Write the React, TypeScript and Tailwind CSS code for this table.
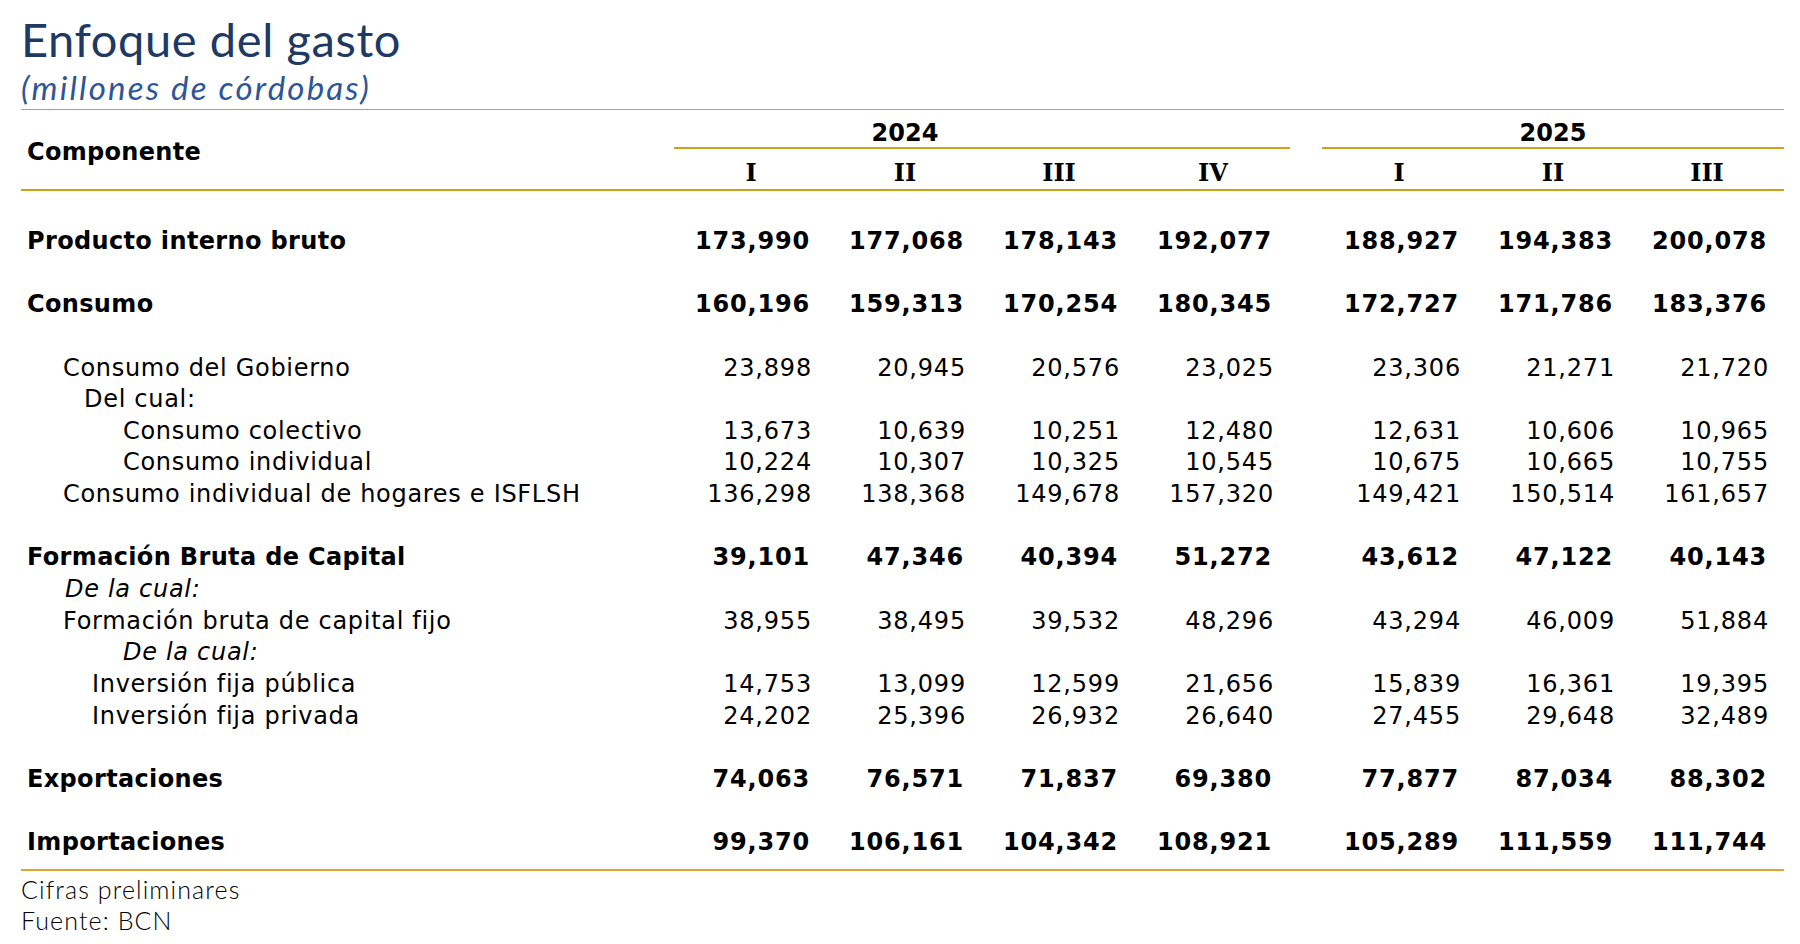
import React from 'react';

type Row = {
    label?: string;
    indent?: string;
    bold?: boolean;
    italic?: boolean;
    values?: string[];
};

const ROWS: Row[] = [
    { label: 'Producto interno bruto', bold: true, indent: 'pl-[6px]', values: ['173,990', '177,068', '178,143', '192,077', '188,927', '194,383', '200,078'] },
    {},
    { label: 'Consumo', bold: true, indent: 'pl-[6px]', values: ['160,196', '159,313', '170,254', '180,345', '172,727', '171,786', '183,376'] },
    {},
    { label: 'Consumo del Gobierno', indent: 'pl-[42px]', values: ['23,898', '20,945', '20,576', '23,025', '23,306', '21,271', '21,720'] },
    { label: 'Del cual:', indent: 'pl-[63px]' },
    { label: 'Consumo colectivo', indent: 'pl-[102px]', values: ['13,673', '10,639', '10,251', '12,480', '12,631', '10,606', '10,965'] },
    { label: 'Consumo individual', indent: 'pl-[102px]', values: ['10,224', '10,307', '10,325', '10,545', '10,675', '10,665', '10,755'] },
    { label: 'Consumo individual de hogares e ISFLSH', indent: 'pl-[42px]', values: ['136,298', '138,368', '149,678', '157,320', '149,421', '150,514', '161,657'] },
    {},
    { label: 'Formación Bruta de Capital', bold: true, indent: 'pl-[6px]', values: ['39,101', '47,346', '40,394', '51,272', '43,612', '47,122', '40,143'] },
    { label: 'De la cual:', italic: true, indent: 'pl-[44px]' },
    { label: 'Formación bruta de capital fijo', indent: 'pl-[42px]', values: ['38,955', '38,495', '39,532', '48,296', '43,294', '46,009', '51,884'] },
    { label: 'De la cual:', italic: true, indent: 'pl-[102px]' },
    { label: 'Inversión fija pública', indent: 'pl-[71px]', values: ['14,753', '13,099', '12,599', '21,656', '15,839', '16,361', '19,395'] },
    { label: 'Inversión fija privada', indent: 'pl-[71px]', values: ['24,202', '25,396', '26,932', '26,640', '27,455', '29,648', '32,489'] },
    {},
    { label: 'Exportaciones', bold: true, indent: 'pl-[6px]', values: ['74,063', '76,571', '71,837', '69,380', '77,877', '87,034', '88,302'] },
    {},
    { label: 'Importaciones', bold: true, indent: 'pl-[6px]', values: ['99,370', '106,161', '104,342', '108,921', '105,289', '111,559', '111,744'] },
];

const sans = "font-['DejaVu_Sans',Verdana,sans-serif]";
const roman = "font-['DejaVu_Serif',serif] font-bold";

export default function App() {
    return (
        <div className="min-h-screen bg-white text-black pl-[21px] pr-[16px] pt-[13px]">
            {/* Title */}
            <div className="w-[1763px] border-b border-[#d4a017] pb-[3px] font-['Lato',sans-serif]">
                <h1 className="text-[47px] leading-[52px] tracking-[0.6px] text-[#203864]">Enfoque del gasto</h1>
                <p className="mt-[3px] text-[33px] leading-[38px] italic tracking-[2.2px] text-[#2e5597]">
                    (millones de córdobas)
                </p>
            </div>

            {/* Table header */}
            <div className={`w-[1763px] flex border-b-2 border-[#d4a017] ${sans} text-[24px] font-bold`}>
                <div className="w-[653px] flex items-center pl-[6px] pt-[4px] tracking-[0.3px]">Componente</div>
                <div className="w-[616px]">
                    <div className="h-[39px] grid grid-cols-4 border-b-2 border-[#d4a017]">
                        <div />
                        <div className="flex items-center justify-center pt-[5px]">2024</div>
                    </div>
                    <div className={`h-[40px] grid grid-cols-4 ${roman}`}>
                        {['I', 'II', 'III', 'IV'].map((q) => (
                            <div key={q} className="flex items-center justify-center pt-[6px]">{q}</div>
                        ))}
                    </div>
                </div>
                <div className="w-[32px]" />
                <div className="w-[462px]">
                    <div className="h-[39px] grid grid-cols-3 border-b-2 border-[#d4a017]">
                        <div />
                        <div className="flex items-center justify-center pt-[5px]">2025</div>
                    </div>
                    <div className={`h-[40px] grid grid-cols-3 ${roman}`}>
                        {['I', 'II', 'III'].map((q) => (
                            <div key={q} className="flex items-center justify-center pt-[6px]">{q}</div>
                        ))}
                    </div>
                </div>
            </div>

            {/* Body */}
            <div className={`w-[1763px] pt-[32px] pb-[13px] border-b-2 border-[#dda62c] ${sans} text-[24px]`}>
                {ROWS.map((row, i) => (
                    <div
                        key={i}
                        className={`h-[31.65px] grid grid-cols-[653px_154px_154px_154px_154px_32px_154px_154px_154px] items-center ${
                            row.bold ? 'font-bold' : ''
                        }`}
                    >
                        <div
                            className={`${row.indent ?? ''} ${row.italic ? 'italic' : ''} ${
                                row.bold ? 'tracking-[0.35px]' : 'tracking-[0.7px]'
                            } whitespace-nowrap`}
                        >
                            {row.label}
                        </div>
                        {row.values?.slice(0, 4).map((v, j) => (
                            <div key={j} className={`text-right tracking-[0.8px] ${row.bold ? 'pr-[18px]' : 'pr-[16px]'}`}>
                                {v}
                            </div>
                        ))}
                        {row.values && <div />}
                        {row.values?.slice(4).map((v, j) => (
                            <div key={j} className={`text-right tracking-[0.8px] ${row.bold ? 'pr-[17px]' : 'pr-[15px]'}`}>
                                {v}
                            </div>
                        ))}
                    </div>
                ))}
            </div>

            {/* Notes */}
            <div className="pt-[3px] font-['Lato',sans-serif] font-light text-[25px] leading-[31px] tracking-[1.1px] text-black">
                <p>Cifras preliminares</p>
                <p>Fuente: BCN</p>
            </div>
        </div>
    );
}
